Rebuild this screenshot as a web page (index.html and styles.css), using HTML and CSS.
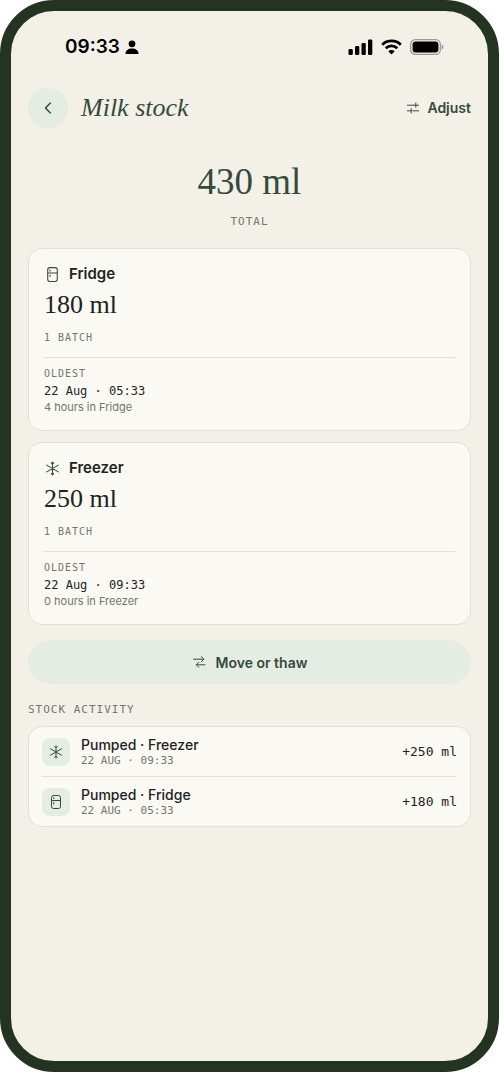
FILE: index.html
```html
<!DOCTYPE html>
<html lang="en">
<head>
<meta charset="utf-8">
<meta name="viewport" content="width=device-width, initial-scale=1">
<title>Milk stock</title>
<link rel="stylesheet" href="styles.css">
</head>
<body>
<svg class="defs" aria-hidden="true">
  <symbol id="fridge" viewBox="0 0 16 16"><rect x="3.5" y="1.5" width="9" height="13" rx="2"/><path d="M3.5 6.5h9M5.7 3.7v1M5.7 8.5v1.4"/></symbol>
  <symbol id="flake" viewBox="0 0 16 16"><path d="M8 2v12M2.500 4.800l11 6.400M2.500 11.200l11-6.400M6.800 2.600L8 3.800l1.200-1.200M6.800 13.400L8 12.200l1.200 1.200"/></symbol>
</svg>
<div class="phone">
  <div class="status">
    <div class="clock"><span>09:33</span>
      <svg width="14" height="15" viewBox="0 0 14 15"><circle cx="7" cy="3.8" r="3.4"/><path d="M.5 14c0-3.400 2.600-5.400 6.500-5.400s6.500 2 6.500 5.400z"/></svg>
    </div>
    <div class="signals">
      <svg width="25" height="16" viewBox="0 0 25 16"><rect x="0.500" y="10" width="4.300" height="6" rx="1.300"/><rect x="7" y="7" width="4.300" height="9" rx="1.300"/><rect x="13.500" y="4" width="4.300" height="12" rx="1.300"/><rect x="20" y="0.500" width="4.300" height="15.500" rx="1.300"/></svg>
      <svg width="21" height="16" viewBox="0 0 21 16"><g fill="none" stroke="#000" stroke-width="2.700"><path d="M1.200 5.700a13.300 13.300 0 0 1 18.600 0"/><path d="M4.700 9.300a8.300 8.300 0 0 1 11.600 0"/></g><path d="M7.300 12.200a4.600 4.600 0 0 1 6.400 0L10.500 15.500z"/></svg>
      <svg width="34" height="16" viewBox="0 0 34 16"><rect x=".7" y=".7" width="29.600" height="14.600" rx="4.600" fill="none" stroke="#9b9b94" stroke-width="1.300"/><rect x="2.600" y="2.600" width="25.800" height="10.800" rx="2.900"/><path d="M31.700 5.300c2.300.6 2.300 4.800 0 5.400z" fill="#9b9b94"/></svg>
    </div>
  </div>
  <header class="top">
    <button class="back" type="button" aria-label="Back"><svg class="icon" width="16" height="16" viewBox="0 0 16 16"><path d="M10.300 3L5.500 8l4.800 5" stroke-width="1.500"/></svg></button>
    <h1 class="title">Milk stock</h1>
    <button class="adjust" type="button"><svg class="icon" width="14" height="14" viewBox="0 0 14 14"><path d="M1.500 4.200h11M9.800 2v4.400M1.500 9.800h3.700M6.800 9.800h5.700M5.200 7.600V12"/></svg>Adjust</button>
  </header>
  <main class="content">
    <div class="total"><div class="total-value">430 ml</div><div class="label wide">TOTAL</div></div>
    <div class="cards">
      <section class="card">
        <h2 class="card-title"><svg class="icon" width="17" height="17"><use href="#fridge"/></svg>Fridge</h2>
        <div class="amount">180 ml</div>
        <div class="label">1 BATCH</div>
        <div class="oldest"><div class="label">OLDEST</div><div class="date">22 Aug · 05:33</div><div class="age">4 hours in Fridge</div></div>
      </section>
      <section class="card">
        <h2 class="card-title"><svg class="icon" width="17" height="17"><use href="#flake"/></svg>Freezer</h2>
        <div class="amount">250 ml</div>
        <div class="label">1 BATCH</div>
        <div class="oldest"><div class="label">OLDEST</div><div class="date">22 Aug · 09:33</div><div class="age">0 hours in Freezer</div></div>
      </section>
    </div>
    <button class="move" type="button"><svg class="icon" width="14" height="14" viewBox="0 0 14 14"><path d="M1.500 4.200h10.300M9.300 1.700l2.500 2.500-2.500 2.500M13 9.800H4.300M6.800 7.300L4.300 9.800l2.500 2.500"/></svg>Move or thaw</button>
    <h2 class="label wide">STOCK ACTIVITY</h2>
    <ul class="activity">
      <li class="entry"><span class="tile"><svg class="icon" width="16" height="16"><use href="#flake"/></svg></span><div class="info"><div class="name">Pumped · Freezer</div><div class="when">22 AUG · 09:33</div></div><span class="delta">+250 ml</span></li>
      <li class="entry"><span class="tile"><svg class="icon" width="16" height="16"><use href="#fridge"/></svg></span><div class="info"><div class="name">Pumped · Fridge</div><div class="when">22 AUG · 05:33</div></div><span class="delta">+180 ml</span></li>
    </ul>
  </main>
</div>
</body>
</html>
```
FILE: styles.css
```css
:root {
  --ink: #22231f;
  --green: #354a3c;
  --muted: #74756e;
  --mint: #e5ece4;
  --line: #e0e0d8;
  --paper: #faf9f3;
  --serif: "Liberation Serif", serif;
  --mono: "DejaVu Sans Mono", monospace;
}
* { box-sizing: border-box; margin: 0; padding: 0; }
body { background: #fff; color: var(--ink); font-family: Inter, sans-serif; }
button { border: 0; background: none; color: var(--green); font: inherit; cursor: pointer; }
.defs { display: none; }
.icon { flex: none; fill: none; stroke: currentColor; color: var(--green); stroke-width: 1; stroke-linecap: round; stroke-linejoin: round; }
.phone { min-height: 100vh; border: 11px solid #253322; border-radius: 54px; background: #f3f0e8; padding: 24px 17px; }
.status { display: flex; justify-content: space-between; align-items: center; height: 24px; padding: 0 27px 0 37px; }
.clock { display: flex; align-items: center; gap: 5px; color: #000; font-size: 19px; font-weight: 600; line-height: 24px; }
.signals { display: flex; align-items: center; gap: 8px; }
.top { display: flex; align-items: center; gap: 13px; height: 40px; margin-top: 29px; }
.back { display: flex; align-items: center; justify-content: center; width: 40px; height: 40px; border-radius: 50%; background: var(--mint); }
.title { flex: 1; font: italic 400 26px/40px var(--serif); color: var(--green); }
.adjust { display: flex; align-items: center; gap: 7px; font-size: 14px; font-weight: 600; line-height: 20px; }
.total { display: flex; flex-direction: column; align-items: center; padding-top: 30px; }
.total-value { font: 400 37px/48px var(--serif); color: var(--green); }
.label { font: 400 10px/12px var(--mono); letter-spacing: 1px; color: var(--muted); }
.wide { font-size: 11px; }
.total .label { margin-top: 10px; }
.cards { display: grid; gap: 11px; margin-top: 20px; }
.card { border: 1px solid var(--line); border-radius: 14px; background: var(--paper); padding: 15px; }
.card-title { display: flex; align-items: center; gap: 8px; font-size: 15px; font-weight: 600; line-height: 20px; }
.amount { font: 400 26px/36px var(--serif); margin-top: 3px; }
.card > .label { margin-top: 9px; }
.oldest { margin-top: 13px; padding-top: 10px; border-top: 1px solid var(--line); }
.date { font: 400 12px/16px var(--mono); margin-top: 3px; }
.age { font-size: 11px; line-height: 16px; color: var(--muted); }
.move { display: flex; align-items: center; justify-content: center; gap: 10px; width: 100%; height: 44px; margin: 15px 0 20px; border-radius: 22px; background: var(--mint); font-size: 14px; font-weight: 600; }
.activity { list-style: none; margin-top: 10px; border: 1px solid var(--line); border-radius: 14px; background: var(--paper); padding: 0 13px; }
.entry { display: flex; align-items: center; gap: 11px; height: 49px; }
.entry + .entry { height: 50px; border-top: 1px solid var(--line); }
.tile { display: flex; align-items: center; justify-content: center; width: 28px; height: 28px; border-radius: 8px; background: var(--mint); }
.info { flex: 1; }
.name { font-size: 14px; font-weight: 500; line-height: 18px; }
.when { font: 400 11px/14px var(--mono); color: var(--muted); }
.delta { font: 400 13px/16px var(--mono); }
```
